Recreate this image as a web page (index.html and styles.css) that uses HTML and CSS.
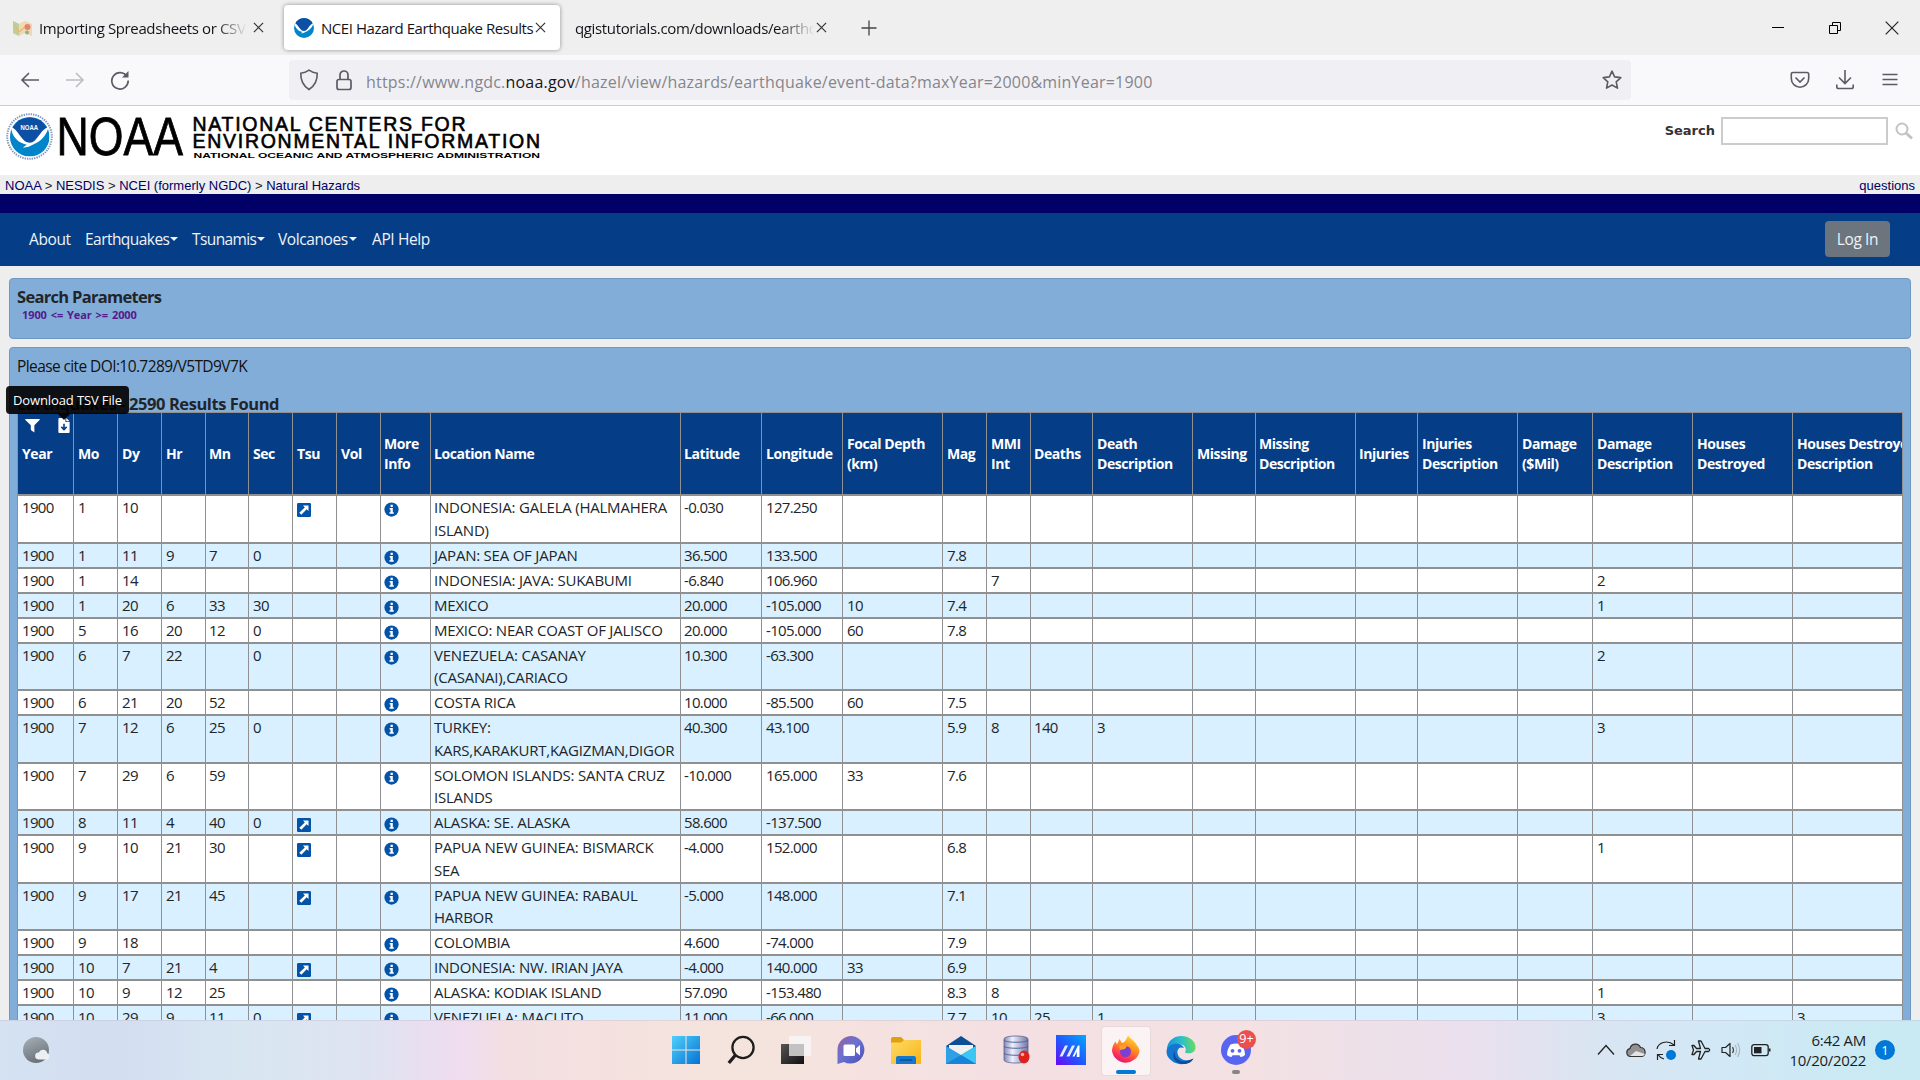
FILE: index.html
```html
<!DOCTYPE html>
<html lang="en">
<head>
<meta charset="utf-8">
<title>NCEI Hazard Earthquake Results</title>
<link rel="stylesheet" href="styles.css">
</head>
<body>
<svg class="defs" aria-hidden="true">
  <defs>
    <symbol id="info" viewBox="0 0 16 16"><circle cx="8" cy="8" r="7.6" fill="#0353a9"/><path d="M7 3h2.4v2.2H7zM6 6.4h3.4v4.4h1v1.6H5.8v-1.6h1.1V8H6z" fill="#fff"/></symbol>
    <symbol id="link" viewBox="0 0 14 14"><rect width="14" height="14" rx="1.2" fill="#0353a9"/><path d="M6 2.600h5.500v5.500L9.700 6.300l-5.400 5.500-2-2 5.500-5.400z" fill="#fff"/></symbol>
    <symbol id="close" viewBox="0 0 12 12"><path d="M1 1l10 10M11 1L1 11" fill="none" stroke="#333" stroke-width="1.3"/></symbol>
    <symbol id="noaa" viewBox="0 0 40 40"><circle cx="20" cy="20" r="20" fill="#0085ca"/><path d="M2.500 11A20 20 0 0 1 37.500 11L28 23q-4 4-8 4.500Q16 27 12 23z" fill="#0d4fa3"/><path d="M1 10c4 1 7 6 10 10s5 6 9 6c4 0 6-3 9-7s6-8 10-9c-1 6-6 13-12 16l-8 4c-2 0-4 1-6 1l4-3C8 26 2 20 1 10z" fill="#fff"/></symbol>
    <linearGradient id="gWin" x1="0" y1="0" x2="1" y2="1"><stop offset="0" stop-color="#4fd0fb"/><stop offset="1" stop-color="#0673d3"/></linearGradient>
    <linearGradient id="gDark" x1="0" y1="0" x2="1" y2="1"><stop offset="0" stop-color="#555"/><stop offset="1" stop-color="#111"/></linearGradient>
    <linearGradient id="gChat" x1="0" y1="0" x2="1" y2="1"><stop offset="0" stop-color="#9a5f9e"/><stop offset=".45" stop-color="#6a72d2"/><stop offset="1" stop-color="#4d4fb8"/></linearGradient>
    <linearGradient id="gFold" x1="0" y1="0" x2="1" y2="1"><stop offset="0" stop-color="#ffdb67"/><stop offset="1" stop-color="#f7b416"/></linearGradient>
    <linearGradient id="gDb"><stop offset="0" stop-color="#8088b4"/><stop offset=".35" stop-color="#edf0ff"/><stop offset="1" stop-color="#6f77a8"/></linearGradient>
    <linearGradient id="gArm" x1="0" y1="1" x2="1" y2="0"><stop offset="0" stop-color="#6b06f5"/><stop offset=".5" stop-color="#1e5cff"/><stop offset="1" stop-color="#00a9ff"/></linearGradient>
    <linearGradient id="gFox" x1=".8" y1="0" x2=".3" y2="1"><stop offset="0" stop-color="#ffe635"/><stop offset=".45" stop-color="#ff8a20"/><stop offset=".8" stop-color="#fb2f58"/><stop offset="1" stop-color="#d71c78"/></linearGradient>
    <linearGradient id="gEdge" x1="0" y1=".4" x2="1" y2=".3"><stop offset="0" stop-color="#1790dd"/><stop offset=".5" stop-color="#2bbecb"/><stop offset="1" stop-color="#6ade5b"/></linearGradient>
    <linearGradient id="gMoon" x1="0" y1="0" x2=".4" y2="1"><stop offset="0" stop-color="#a9b1b8"/><stop offset="1" stop-color="#6c747b"/></linearGradient>
  </defs>
</svg>

<header class="tabs">
  <div class="tab tab-map">
    <svg class="favicon" viewBox="0 0 20 20"><path d="M0 3l6 3 6-3 7 3v12l-7-3-6 3-6-3z" fill="#ead9b4"/><path d="M0 3l6 3v12l-6-3z" fill="#b9cf9f"/><path d="M6 6l6-3v6l-6 4z" fill="#f3d9b1"/><path d="M1 7l5 7 6-5" fill="none" stroke="#efb867" stroke-width="1.500"/><circle cx="14.500" cy="9" r="3" fill="#e6836b"/><circle cx="14" cy="14.500" r="2" fill="#9cad8a"/></svg>
    <span class="tab-title fade t1">Importing Spreadsheets or CSV f</span>
    <svg class="x"><use href="#close"/></svg>
  </div>
  <div class="tab tab-active">
    <svg class="favicon"><use href="#noaa"/></svg>
    <span class="tab-title t2">NCEI Hazard Earthquake Results</span>
    <svg class="x"><use href="#close"/></svg>
  </div>
  <div class="tab tab-plain">
    <span class="tab-title fade t3">qgistutorials.com/downloads/earthq</span>
    <svg class="x"><use href="#close"/></svg>
  </div>
  <svg class="plus" viewBox="0 0 16 16"><path d="M8 .5v15M.5 8h15" stroke="#444" stroke-width="1.300"/></svg>
  <div class="win">
    <svg viewBox="0 0 14 14"><path d="M1 6.500h12" stroke="#000"/></svg>
    <svg viewBox="0 0 14 14"><path d="M1.500 4.500h8v8h-8zM4.500 4V1.500h8v8H10" fill="none" stroke="#000"/></svg>
    <svg viewBox="0 0 14 14"><path d="M.7.7l12.600 12.600M13.300.7L.7 13.300" stroke="#222" stroke-width="1.200"/></svg>
  </div>
</header>

<div class="toolbar">
  <div class="nav-btns">
    <svg viewBox="0 0 20 20"><path d="M19 10H2M9 3L2 10l7 7" fill="none" stroke="#5b5b66" stroke-width="1.600"/></svg>
    <svg class="off" viewBox="0 0 20 20"><path d="M1 10h17M11 3l7 7-7 7" fill="none" stroke="#bdbdc2" stroke-width="1.600"/></svg>
    <svg viewBox="0 0 20 20"><path d="M17 6.500A8.200 8.200 0 1 0 18.200 10.500" fill="none" stroke="#5b5b66" stroke-width="1.700"/><path d="M18.500 1v6.500H12z" fill="#5b5b66"/></svg>
  </div>
  <div class="urlbar">
    <svg class="shield" viewBox="0 0 20 22"><path d="M10 1.200c2.600 1.900 5.300 2.700 8.200 3 .3 6.800-2.400 12.500-8.200 16.300C4.200 16.700 1.500 11 1.800 4.200c2.900-.3 5.600-1.100 8.200-3z" fill="none" stroke="#5b5b66" stroke-width="1.600"/></svg>
    <svg class="lock" viewBox="0 0 16 21"><rect x="1" y="9.500" width="14" height="10" rx="2" fill="none" stroke="#5b5b66" stroke-width="1.700"/><path d="M4 9.500V5a4 4 0 0 1 8 0v4.500" fill="none" stroke="#5b5b66" stroke-width="1.700"/></svg>
    <span class="url">https://www.ngdc.<b>noaa.gov</b>/hazel/view/hazards/earthquake/event-data?maxYear=2000&amp;minYear=1900</span>
    <svg class="star" viewBox="0 0 20 20"><path d="M10 1.200l2.600 5.700 6.200.7-4.600 4.200 1.300 6.300L10 15l-5.500 3.100 1.300-6.300L1.200 7.600l6.200-.7z" fill="none" stroke="#5b5b66" stroke-width="1.600" stroke-linejoin="round"/></svg>
  </div>
  <div class="tools">
    <svg viewBox="0 0 20 20"><path d="M3 2.500h14q1.700 0 1.700 1.700v4.300a8.700 8.700 0 0 1-17.400 0V4.200Q1.300 2.500 3 2.500z" fill="none" stroke="#5b5b66" stroke-width="1.600"/><path d="M5.500 7.500L10 12l4.500-4.500" fill="none" stroke="#5b5b66" stroke-width="1.600"/></svg>
    <svg viewBox="0 0 20 20"><path d="M10 0v13M4 7.500l6 6 6-6M1.800 14.500v2.200q0 1.800 1.800 1.800h12.800q1.800 0 1.800-1.800v-2.200" fill="none" stroke="#5b5b66" stroke-width="1.600"/></svg>
    <svg viewBox="0 0 20 20"><path d="M2.500 4.500h15M2.500 9.500h15M2.500 14.500h15" fill="none" stroke="#5b5b66" stroke-width="1.500"/></svg>
  </div>
</div>

<main class="page">
  <div class="brand">
    <svg class="logo" viewBox="0 0 550 69" width="550" height="69">
      <circle cx="29.500" cy="30.500" r="22.300" fill="none" stroke="#8796bd" stroke-width="2" stroke-dasharray="1.400 1"/>
      <use href="#noaa" x="10" y="11" width="39.500" height="39.500"/>
      <text x="20.500" y="24" class="lg-mini" textLength="17.500" lengthAdjust="spacingAndGlyphs">NOAA</text>
      <text x="56.500" y="49" class="lg-big" textLength="126.500" lengthAdjust="spacingAndGlyphs">NOAA</text>
      <text x="192.500" y="24.700" class="lg-mid" textLength="273">NATIONAL CENTERS FOR</text>
      <text x="192.500" y="42" class="lg-mid" textLength="347.500">ENVIRONMENTAL INFORMATION</text>
      <text x="193.500" y="51.800" class="lg-small" textLength="346.500" lengthAdjust="spacingAndGlyphs">NATIONAL OCEANIC AND ATMOSPHERIC ADMINISTRATION</text>
    </svg>
    <form class="search">
      <label>Search</label><span class="field"></span>
      <svg viewBox="0 0 18 18"><circle cx="7" cy="7" r="5.500" fill="none" stroke="#c3c3c3" stroke-width="2"/><path d="M11 11l6 5.500" stroke="#c3c3c3" stroke-width="3"/></svg>
    </form>
  </div>
  <div class="crumbs"><div><a>NOAA</a> &gt; <a>NESDIS</a> &gt; <a>NCEI (formerly NGDC)</a> &gt; <a>Natural Hazards</a></div><a>questions</a></div>
  <div class="stripe"></div>
  <nav class="menu">
    <a class="m1">About</a><a class="m2 dd">Earthquakes</a><a class="m3 dd">Tsunamis</a><a class="m4 dd">Volcanoes</a><a class="m5">API Help</a>
    <span class="login">Log In</span>
  </nav>

  <section class="card params">
    <h2>Search Parameters</h2>
    <p>1900 &lt;= Year &gt;= 2000</p>
  </section>

  <section class="card results">
    <p class="cite">Please cite DOI:10.7289/V5TD9V7K</p>
    <h2 class="found">Earthquakes - 2590 Results Found</h2>
    <div class="tooltip">Download TSV File</div>
    <div class="grid">
    <table>
      <colgroup><col class="w56"><col class="w44"><col class="w44"><col class="w44"><col class="w43"><col class="w44"><col class="w44"><col class="w44"><col class="w50"><col class="w250"><col class="w81"><col class="w81"><col class="w100"><col class="w44"><col class="w44"><col class="w62"><col class="w100"><col class="w63"><col class="w100"><col class="w62"><col class="w100"><col class="w75"><col class="w100"><col class="w100"><col class="w110"></colgroup>
      <thead><tr>
        <th><div class="year"><div class="year-icons">
          <svg class="funnel" viewBox="0 0 16 16"><path d="M.5 1h15q.6.3 0 1L10 7.800V15.500L6.200 12.800V7.800L.4 2Q0 1.200.5 1z" fill="#fff"/></svg>
          <svg class="file" viewBox="0 0 12 16"><path d="M0 1q0-1 1-1h6.500v4.300H12V15q0 1-1 1H1q-1 0-1-1zM8.400 0L12 3.500H8.400z" fill="#fff"/><path d="M6 6v6M3.200 9.500L6 12.300l2.800-2.800" fill="none" stroke="#053e87" stroke-width="1.700"/></svg>
        </div><span>Year</span></div>
        <th>Mo<th>Dy<th>Hr<th>Mn<th>Sec<th>Tsu<th>Vol<th>More<br>Info<th>Location Name<th>Latitude<th>Longitude<th>Focal Depth<br>(km)<th>Mag<th>MMI<br>Int<th>Deaths<th>Death<br>Description<th>Missing<th>Missing<br>Description<th>Injuries<th>Injuries<br>Description<th>Damage<br>($Mil)<th>Damage<br>Description<th>Houses<br>Destroyed<th>Houses Destroyed<br>Description
      </thead>
      <tbody>
        <tr class="r48"><td>1900<td>1<td>10<td><td><td><td><svg class="ln"><use href="#link"/></svg><td><td><svg class="in"><use href="#info"/></svg><td>INDONESIA: GALELA (HALMAHERA<br>ISLAND)<td>-0.030<td>127.250<td><td><td><td><td><td><td><td><td><td><td><td><td>
        <tr><td>1900<td>1<td>11<td>9<td>7<td>0<td><td><td><svg class="in"><use href="#info"/></svg><td>JAPAN: SEA OF JAPAN<td>36.500<td>133.500<td><td>7.8<td><td><td><td><td><td><td><td><td><td><td>
        <tr><td>1900<td>1<td>14<td><td><td><td><td><td><svg class="in"><use href="#info"/></svg><td>INDONESIA: JAVA: SUKABUMI<td>-6.840<td>106.960<td><td><td>7<td><td><td><td><td><td><td><td>2<td><td>
        <tr><td>1900<td>1<td>20<td>6<td>33<td>30<td><td><td><svg class="in"><use href="#info"/></svg><td>MEXICO<td>20.000<td>-105.000<td>10<td>7.4<td><td><td><td><td><td><td><td><td>1<td><td>
        <tr><td>1900<td>5<td>16<td>20<td>12<td>0<td><td><td><svg class="in"><use href="#info"/></svg><td>MEXICO: NEAR COAST OF JALISCO<td>20.000<td>-105.000<td>60<td>7.8<td><td><td><td><td><td><td><td><td><td><td>
        <tr class="r47"><td>1900<td>6<td>7<td>22<td><td>0<td><td><td><svg class="in"><use href="#info"/></svg><td>VENEZUELA: CASANAY<br>(CASANAI),CARIACO<td>10.300<td>-63.300<td><td><td><td><td><td><td><td><td><td><td>2<td><td>
        <tr><td>1900<td>6<td>21<td>20<td>52<td><td><td><td><svg class="in"><use href="#info"/></svg><td>COSTA RICA<td>10.000<td>-85.500<td>60<td>7.5<td><td><td><td><td><td><td><td><td><td><td>
        <tr class="r48"><td>1900<td>7<td>12<td>6<td>25<td>0<td><td><td><svg class="in"><use href="#info"/></svg><td>TURKEY:<br>KARS,KARAKURT,KAGIZMAN,DIGOR<td>40.300<td>43.100<td><td>5.9<td>8<td>140<td>3<td><td><td><td><td><td>3<td><td>
        <tr class="r47"><td>1900<td>7<td>29<td>6<td>59<td><td><td><td><svg class="in"><use href="#info"/></svg><td>SOLOMON ISLANDS: SANTA CRUZ<br>ISLANDS<td>-10.000<td>165.000<td>33<td>7.6<td><td><td><td><td><td><td><td><td><td><td>
        <tr><td>1900<td>8<td>11<td>4<td>40<td>0<td><svg class="ln"><use href="#link"/></svg><td><td><svg class="in"><use href="#info"/></svg><td>ALASKA: SE. ALASKA<td>58.600<td>-137.500<td><td><td><td><td><td><td><td><td><td><td><td><td>
        <tr class="r48"><td>1900<td>9<td>10<td>21<td>30<td><td><svg class="ln"><use href="#link"/></svg><td><td><svg class="in"><use href="#info"/></svg><td>PAPUA NEW GUINEA: BISMARCK<br>SEA<td>-4.000<td>152.000<td><td>6.8<td><td><td><td><td><td><td><td><td>1<td><td>
        <tr class="r47"><td>1900<td>9<td>17<td>21<td>45<td><td><svg class="ln"><use href="#link"/></svg><td><td><svg class="in"><use href="#info"/></svg><td>PAPUA NEW GUINEA: RABAUL<br>HARBOR<td>-5.000<td>148.000<td><td>7.1<td><td><td><td><td><td><td><td><td><td><td>
        <tr><td>1900<td>9<td>18<td><td><td><td><td><td><svg class="in"><use href="#info"/></svg><td>COLOMBIA<td>4.600<td>-74.000<td><td>7.9<td><td><td><td><td><td><td><td><td><td><td>
        <tr><td>1900<td>10<td>7<td>21<td>4<td><td><svg class="ln"><use href="#link"/></svg><td><td><svg class="in"><use href="#info"/></svg><td>INDONESIA: NW. IRIAN JAYA<td>-4.000<td>140.000<td>33<td>6.9<td><td><td><td><td><td><td><td><td><td><td>
        <tr><td>1900<td>10<td>9<td>12<td>25<td><td><td><td><svg class="in"><use href="#info"/></svg><td>ALASKA: KODIAK ISLAND<td>57.090<td>-153.480<td><td>8.3<td>8<td><td><td><td><td><td><td><td>1<td><td>
        <tr><td>1900<td>10<td>29<td>9<td>11<td>0<td><svg class="ln"><use href="#link"/></svg><td><td><svg class="in"><use href="#info"/></svg><td>VENEZUELA: MACUTO<td>11.000<td>-66.000<td><td>7.7<td>10<td>25<td>1<td><td><td><td><td><td>3<td><td>3
      </tbody>
    </table>
    </div>
  </section>
</main>

<footer class="taskbar">
  <svg class="weather" viewBox="0 0 28 27"><circle cx="13" cy="13" r="13" fill="url(#gMoon)"/><path d="M15.500 22.500a3.500 3.500 0 0 1 .3-7 4.500 4.500 0 0 1 8.500.8 3.200 3.200 0 0 1-.3 6.200z" fill="#edf0f3"/></svg>
  <div class="apps">
    <div class="app"><svg viewBox="0 0 30 30"><path d="M1 1h13.500v13.500H1zM15.500 1H29v13.500H15.500zM1 15.500h13.500V29H1zM15.500 15.500H29V29H15.500z" fill="url(#gWin)"/></svg></div>
    <div class="app"><svg viewBox="0 0 30 30"><circle cx="17" cy="12.500" r="10.600" fill="none" stroke="#1d1d1d" stroke-width="2.300"/><path d="M9.500 20L2.800 28" stroke="#1d1d1d" stroke-width="3.300"/></svg></div>
    <div class="app"><svg viewBox="0 0 30 30"><path d="M0 9h23v20H0z" fill="url(#gDark)"/><path d="M8 1h22v20H8z" fill="#f6f6f6" opacity=".85"/><path d="M8 9h15v12H8z" fill="#bbb" opacity=".8"/></svg></div>
    <div class="app"><svg viewBox="0 0 30 30"><path d="M15.500 1A13.800 13.800 0 1 1 8 26.900L1.500 29V15A14 14 0 0 1 15.500 1z" fill="url(#gChat)"/><rect x="7.500" y="9.500" width="11.500" height="11.500" rx="1.500" fill="#fff"/><path d="M20 13.500l4-3.500v10.500L20 17z" fill="#fff"/></svg></div>
    <div class="app"><svg viewBox="0 0 30 30"><path d="M0 4q0-2 2-2h8l3 3-2 4H0z" fill="#e0a10c"/><path d="M0 7.500h10L13.500 5H30v24H0z" fill="url(#gFold)"/><path d="M5 29v-6q0-2 2-2h16q2 0 2 2v6z" fill="#1479cd"/><path d="M9 25h12" stroke="#0b4e92" stroke-width="1.500"/></svg></div>
    <div class="app"><svg viewBox="0 0 30 30"><path d="M0 11L15 1l15 10v18H0z" fill="#0d4f94"/><path d="M3 10h24v10H3z" fill="#f1f1f1"/><path d="M0 11l15 9 15-9v18H0z" fill="#2f9fe6"/><path d="M30 11v18L15 20z" fill="#3cc6f4"/><path d="M0 29l15-9 15 9z" fill="#1684d8"/></svg></div>
    <div class="app"><svg viewBox="0 0 30 30"><path d="M3 4c0-4 24-4 24 0v21c0 4-24 4-24 0z" fill="url(#gDb)" stroke="#5d6286" stroke-width=".8"/><path d="M3 5c0 3 24 3 24 0M3 11c0 3 24 3 24 0M3 18c0 3 24 3 24 0" fill="none" stroke="#5a608c"/><ellipse cx="23" cy="22" rx="5.500" ry="6.500" fill="#e0201c"/><circle cx="21.500" cy="19.500" r="1.800" fill="#ffaeae"/></svg></div>
    <div class="app"><svg viewBox="0 0 30 30"><path d="M0 0h30v30H0z" fill="url(#gArm)"/><path d="M3.500 21.500L9 10.500h3L6.500 21.500zM10.500 21.500L16 10.500h3L13.500 21.500z" fill="#e4ecff"/><path d="M16.500 21.500L22 10.500h1.500V22h-2.700v-5.500l-2.300 5z" fill="#fff"/></svg></div>
    <div class="app current"><svg viewBox="0 0 30 30"><path d="M1 16c0-4 1.500-7 3.500-9.500L6 9.500 8.500 4 11 8c3-.500 4-3 6-7.500 2 3 6.500 5 9 10 1.500 1.500 2.500 3.500 2.500 6A14 14 0 0 1 1 16z" fill="url(#gFox)"/><circle cx="14.500" cy="16.500" r="5.500" fill="#7a3fd4"/><path d="M8 11c3-2 6-1 8 0l-2 3-5 1z" fill="#ff9d2b"/></svg></div>
    <div class="app"><svg viewBox="0 0 30 30"><path d="M1 17C0 7 7 1 15.500 1 24 1 30 7 29.500 13c-.5 5-6 6.500-10.500 4.500 2-3 .5-8-5-8C8 9.500 3 12 1 17z" fill="url(#gEdge)"/><path d="M.5 16C2 8 15 6 18 13c-5-2-8 2-6 7s9 7 15.500 3.500C24 30 12 31 6 26 2 23 .5 20 .5 16z" fill="#1377cf"/><path d="M9 16c-2 8 7 14 18.500 7.500C23 32 9 30 7.500 22 7 19 8 17 9 16z" fill="#0e4d98"/></svg></div>
    <div class="app"><svg viewBox="0 0 30 30"><circle cx="15" cy="15" r="15" fill="#5865f2"/><path d="M9.500 9.500q5.500-2 11 0 3.500 5 3.500 10.500-2 1.800-4.500 2l-1-1.800h-7l-1 1.800Q8 21.800 6 20q0-5.500 3.500-10.500z" fill="#fff"/><circle cx="11.500" cy="15.800" r="1.900" fill="#5865f2"/><circle cx="18.500" cy="15.800" r="1.900" fill="#5865f2"/></svg><span class="badge">9+</span><i class="dot"></i></div>
  </div>
  <div class="tray">
    <svg viewBox="0 0 20 20"><path d="M2 14.500l8-9 8 9" fill="none" stroke="#222" stroke-width="1.300"/></svg>
    <svg viewBox="0 0 20 20"><path d="M4.500 16.500a4 4 0 0 1-.5-7.900A5.500 5.500 0 0 1 14.500 7.500a4.600 4.600 0 0 1 1.300 9z" fill="#929292" stroke="#333" stroke-width="1.200"/><path d="M4 16l6-5 9 3q-.500 2-3 2z" fill="#e3e3e3"/></svg>
    <svg viewBox="0 0 20 20"><path d="M1 9C2 3 11-1 18 5M18.500 0v5.500H13M8 19Q4 18 2 14.500M1.500 20v-5.500H7" fill="none" stroke="#222" stroke-width="1.200"/><circle cx="15" cy="15" r="5" fill="#0078d7"/></svg>
    <svg class="plane" viewBox="0 0 20 20"><path d="M1 5.500h2l2.500 3h4L7.500 1h2.500l4 7.500h3.500q2.300 1.500 0 3H14L10 19H7.500l2-7.500h-4l-2.500 3H1L2.500 10z" fill="none" stroke="#222" stroke-width="1.300" stroke-linejoin="round"/></svg>
    <svg viewBox="0 0 20 20"><path d="M1 7.500h3.500L9 3.500v13L4.500 12.500H1z" fill="none" stroke="#222" stroke-width="1.200" stroke-linejoin="round"/><path d="M11.500 7q2 3 0 6" fill="none" stroke="#444" stroke-width="1.200"/><path d="M14 5q3.300 5 0 10M16.500 3q4.300 7 0 14" fill="none" stroke="#aab6c0" stroke-width="1.200"/></svg>
    <svg viewBox="0 0 20 20"><rect x=".8" y="4.600" width="16.400" height="11" rx="2.300" fill="none" stroke="#222" stroke-width="1.300"/><rect x="3" y="7" width="7.500" height="6.300" fill="#222"/><path d="M18 8.500h1.500v3H18z" fill="#222"/></svg>
  </div>
  <div class="clock"><span>6:42 AM</span><span>10/20/2022</span></div>
  <span class="notif">1</span>
</footer>
</body>
</html>
```

FILE: styles.css
```css
* { box-sizing: border-box; }
body {
  margin: 0; width: 1920px; height: 1080px; overflow: hidden;
  display: flex; flex-direction: column;
  font-family: "Open Sans", "Noto Sans", sans-serif; font-size: 16px; color: #212529; background: #eee;
}
svg { display: block; flex: none; }
.defs { position: absolute; width: 0; height: 0; }
h2, p { margin: 0; }

/* browser tabs */
.tabs { flex: none; height: 55px; background: #efefef; display: flex; align-items: center; color: #15141a; }
.tab { display: flex; align-items: center; height: 45px; font-size: 15px; white-space: nowrap; }
.tab-map { width: 279px; padding-left: 13px; margin-right: 5px; }
.tab-active { width: 276px; padding-left: 10px; background: #fff; border-radius: 4px; box-shadow: 0 0 4px rgba(0,0,0,.4); }
.tab-plain { padding-left: 15px; }
.favicon { width: 20px; height: 20px; margin-right: 6px; }
.tab-active .favicon { margin-right: 7px; }
.tab-title { overflow: hidden; }
.t1 { width: 208px; margin-right: 6px; letter-spacing: -.38px; }
.t2 { width: 213px; margin-right: 1px; letter-spacing: -.45px; }
.t3 { width: 240px; margin-right: 1px; letter-spacing: -.35px; }
.fade { -webkit-mask-image: linear-gradient(90deg, #000 85%, transparent); mask-image: linear-gradient(90deg, #000 85%, transparent); }
.x { width: 11px; height: 11px; }
.plus { width: 16px; height: 16px; margin-left: 34px; }
.win { margin-left: auto; display: flex; gap: 43px; padding-right: 21px; }
.win svg { width: 14px; height: 14px; }

/* address bar */
.toolbar { flex: none; height: 51px; background: #f9f9fb; border-bottom: 1px solid #ccccd0; display: flex; align-items: center; }
.nav-btns { width: 289px; padding-left: 20px; display: flex; gap: 25px; }
.nav-btns svg { width: 20px; height: 20px; }
.urlbar { width: 1342px; height: 40px; border-radius: 4px; background: #f0f0f4; display: flex; align-items: center; padding-left: 10px; }
.shield { width: 20px; height: 22px; margin-right: 17px; }
.lock { width: 16px; height: 21px; margin-right: 14px; }
.url { flex: 1; padding-top: 3px; font-size: 16px; color: #85858c; letter-spacing: .2px; white-space: nowrap; }
.url b { font-weight: 400; color: #15141a; }
.star { width: 20px; height: 20px; margin-right: 9px; }
.tools { margin-left: 159px; display: flex; gap: 25px; }
.tools svg { width: 20px; height: 20px; }

/* site header */
.page { flex: 1; min-height: 0; overflow: hidden; }
.brand { height: 69px; background: #fff; display: flex; justify-content: space-between; }
.lg-mini { font: bold 7px "Liberation Sans", sans-serif; fill: #fff; }
.lg-big { font: 53px "Liberation Sans", sans-serif; stroke: #000; stroke-width: .8; }
.lg-mid { font: 19.5px "Liberation Sans", sans-serif; stroke: #000; stroke-width: .6; }
.lg-small { font: bold 7.500px "Liberation Sans", sans-serif; }
.search { display: flex; align-items: center; height: 50px; padding-right: 7px; }
.search label { font: bold 13px "DejaVu Sans", sans-serif; color: #333; margin-right: 6px; padding-bottom: 2px; }
.field { width: 167px; height: 28px; border: 2px solid #ccc; background: #fff; margin-right: 7px; }
.search svg { width: 18px; height: 18px; }
.crumbs { height: 19px; padding: 1px 5px 0 5px; display: flex; justify-content: space-between; align-items: center; font: 13px "Liberation Sans", sans-serif; background: #eee; }
.crumbs a { color: #006; }
.stripe { height: 19px; background: #006; }
.menu { height: 53px; background: #053e87; display: flex; align-items: center; padding: 0 30px 1px 29px; color: #eef3f8; font-size: 15.500px; letter-spacing: -.4px; }
.menu a { white-space: nowrap; }
.m1 { width: 56px; } .m2 { width: 107px; } .m3 { width: 86px; } .m4 { width: 94px; }
.dd::after { content: ""; display: inline-block; vertical-align: 4px; margin-left: 1px; border: 4px solid transparent; border-top-color: currentColor; border-bottom: 0; }
.m2 { letter-spacing: -.55px; }
.m3 { letter-spacing: -.6px; }
.login { margin-left: auto; width: 65px; height: 36px; line-height: 36px; text-align: center; border-radius: 4px; background: #6c757d; }

/* panels */
.card { margin: 0 9px; background: #82add9; border: 1px solid #6f98c3; border-radius: 4px; }
.params { margin-top: 12px; height: 61px; padding: 6px 7px 0; }
.card h2 { font-size: 16.500px; line-height: 24px; letter-spacing: -.7px; white-space: nowrap; }
.params p { padding-left: 5px; font-size: 11px; font-weight: 700; line-height: 12px; color: #551a8b; letter-spacing: -.1px; word-spacing: 1.200px; }
.results { position: relative; margin-top: 8px; height: 800px; padding: 6px 7px 0; }
.cite { font-size: 15.500px; line-height: 24px; letter-spacing: -.6px; color: #111; }
.card h2.found { margin-top: 14px; height: 20px; letter-spacing: -.43px; }
.tooltip { position: absolute; left: -4px; top: 38px; width: 123px; height: 28px; border-radius: 4px; background: rgba(0,0,0,.9); color: #fff; font-size: 13px; line-height: 28px; letter-spacing: -.12px; text-align: center; white-space: nowrap; }
.tooltip::after { content: ""; position: absolute; left: 52px; top: 28px; border: 6px solid transparent; border-top-color: rgba(0,0,0,.9); border-bottom: 0; }

/* event table */
.grid { width: 1886px; height: 700px; overflow: hidden; border: solid #909090; border-width: 1px 1px 0 0; border-top-left-radius: 3px; }
table { table-layout: fixed; width: 1885px; border-collapse: separate; border-spacing: 0; }
.w43 { width: 43px; } .w44 { width: 44px; } .w50 { width: 50px; } .w56 { width: 56px; } .w62 { width: 62px; } .w63 { width: 63px; } .w75 { width: 75px; }
.w81 { width: 81px; } .w100 { width: 100px; } .w110 { width: 110px; } .w250 { width: 250px; }
th, td { border: solid #909090; border-width: 0 0 2px 1px; padding: 0 0 0 4px; text-align: left; white-space: nowrap; overflow: hidden; }
th { height: 83px; background: #053e87; color: #fff; font-size: 14px; line-height: 20px; letter-spacing: -.43px; }
td { height: 25px; vertical-align: top; font-size: 15px; line-height: 22.500px; letter-spacing: -.65px; }
td:nth-child(10) { letter-spacing: -.22px; padding-left: 3px; }
th:nth-child(5), td:nth-child(5), th:nth-child(9), th:nth-child(10), th:nth-child(11), td:nth-child(11), th:nth-child(16), td:nth-child(16), th:nth-child(19), th:nth-child(20) { padding-left: 3px; }
tbody tr { background: #fff; }
tbody tr:nth-child(even) { background: #d8f0ff; }
.r48 td { height: 48px; }
.r47 td { height: 47px; line-height: 22px; }
.in { width: 15px; height: 15px; margin-top: 6px; margin-left: -1px; }
.ln { width: 14px; height: 14px; margin-top: 7px; }
.year { display: grid; grid-template-rows: 1fr 20px 1fr; height: 81px; }
.year-icons { display: flex; gap: 18px; padding: 5px 0 0 3px; }
.funnel { width: 15px; height: 15px; }
.file { width: 12px; height: 15px; }

/* taskbar */
.taskbar {
  flex: none; height: 60px; display: flex; align-items: center; position: relative; color: #1c1c1c;
  padding-bottom: 1px;
  border-top: 1px solid rgba(190,180,200,.35);
  background: linear-gradient(90deg, #d4e2f2 0, #d3def0 120px, #d8e6f2 240px, #dfe3f1 370px, #efdcef 460px, #f3dfe1 510px, #f5e4dd 730px, #f4e0e2 1000px, #f3e1e3 1250px, #e9e0ee 1480px, #d9e5f2 1600px, #d2e8f6 1720px, #c9eaf3 1880px);
}
.weather { width: 28px; height: 27px; margin-left: 23px; }
.apps { display: flex; margin-left: 607px; }
.app { width: 55px; height: 58px; display: flex; align-items: center; justify-content: center; position: relative; }
.app svg { width: 30px; height: 30px; }
.current::before { content: ""; position: absolute; left: 3px; top: 5px; width: 48px; height: 48px; border-radius: 4px; background: rgba(255,255,255,.6); border: 1px solid rgba(200,180,180,.4); }
.current::after { content: ""; position: absolute; left: 18px; bottom: 5px; width: 20px; height: 4px; border-radius: 2px; background: #0078d7; }
.current svg { position: relative; }
.badge { position: absolute; left: 29px; top: 9px; width: 19px; height: 19px; border-radius: 50%; background: #e9504f; color: #fff; font-size: 12.500px; line-height: 18px; text-align: center; }
.dot { position: absolute; left: 24px; bottom: 5px; width: 8px; height: 4px; border-radius: 2px; background: #8a8585; }
.tray { display: flex; gap: 10px; margin-left: 333px; }
.tray svg { width: 20px; height: 20px; }
.tray .plane { margin-left: 5px; }
.clock { margin-left: auto; padding-bottom: 1px; display: flex; flex-direction: column; align-items: flex-end; font-size: 15px; line-height: 20px; letter-spacing: -.3px; }
.notif { width: 20px; height: 20px; margin: 0 25px 0 9px; border-radius: 50%; background: #0078d7; color: #fff; font-size: 13px; line-height: 20px; text-align: center; }
```
